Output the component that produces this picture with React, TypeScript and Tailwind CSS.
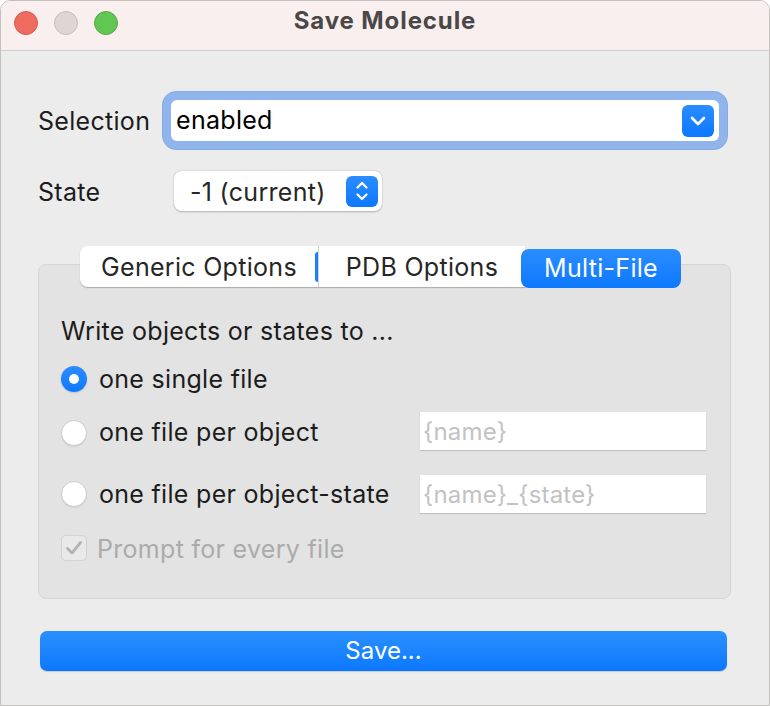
import React from "react";

const font = { fontFamily: "Inter, 'Liberation Sans', sans-serif" };

function ChevronDown() {
  return (
    <svg width="16" height="10" viewBox="0 0 16 10" fill="none">
      <path d="M2 2 L8 8 L14 2" stroke="white" strokeWidth="2.6" strokeLinecap="round" strokeLinejoin="round" />
    </svg>
  );
}

function UpDown() {
  return (
    <svg width="14" height="24" viewBox="0 0 14 24" fill="none">
      <path d="M2.5 8.5 L7 4 L11.5 8.5" stroke="white" strokeWidth="2.2" strokeLinecap="round" strokeLinejoin="round" />
      <path d="M2.5 15.5 L7 20 L11.5 15.5" stroke="white" strokeWidth="2.2" strokeLinecap="round" strokeLinejoin="round" />
    </svg>
  );
}

function Radio({ checked }: { checked?: boolean }) {
  if (checked) {
    return (
      <div className="w-[26px] h-[26px] rounded-full bg-gradient-to-b from-[#2c8cff] to-[#0a78ff] flex items-center justify-center shadow-[0_1px_2px_rgba(0,0,0,0.15)]">
        <div className="w-[10px] h-[10px] rounded-full bg-white" />
      </div>
    );
  }
  return (
    <div className="w-[26px] h-[26px] rounded-full bg-white border border-[#cdcdcd] shadow-[0_1px_1px_rgba(0,0,0,0.08)]" />
  );
}

export default function App() {
  return (
    <div className="w-[770px] h-[706px] bg-white" style={font}>
      <div className="w-full h-full rounded-t-[10px] border border-[#c4c0c0] overflow-hidden bg-[#ececec] flex flex-col">
        {/* Title bar */}
        <div className="h-[50px] bg-[#f9efee] border-b border-[#d2cdcd] grid grid-cols-[1fr_auto_1fr] items-center shrink-0">
          <div className="flex items-center gap-[16px] pl-[13px] -mt-[6px]">
            <div className="w-[24px] h-[24px] rounded-full bg-[#ee6b60] border border-[#d85a4f]" />
            <div className="w-[24px] h-[24px] rounded-full bg-[#ddd6d5] border border-[#c6bebd]" />
            <div className="w-[24px] h-[24px] rounded-full bg-[#62c655] border border-[#52ab46]" />
          </div>
          <div className="text-[24px] font-bold text-[#4b4747] -mt-[9px] tracking-[0.9px]">Save Molecule</div>
          <div />
        </div>

        {/* Body */}
        <div className="flex flex-col pl-[37px] pr-[39px] text-[25px] tracking-[0.3px]">
          {/* Selection */}
          <div className="flex items-center mt-[49px] h-[41px]">
            <div className="w-[133px] pt-[2px] text-[#1c1c1c]">Selection</div>
            <div className="w-[548px] h-[41px] bg-white rounded-[6px] shadow-[0_0_0_8px_#8fb5ec,0_0_0_9px_#86abe4] flex items-center justify-between pl-[5px] pr-[5px]">
              <span className="pt-[1px] text-black">enabled</span>
              <div className="w-[32px] h-[32px] rounded-[6px] bg-gradient-to-b from-[#2a8dff] to-[#0a78ff] flex items-center justify-center">
                <ChevronDown />
              </div>
            </div>
          </div>

          {/* State */}
          <div className="flex items-center mt-[30px] h-[40px]">
            <div className="w-[136px] pt-[3px] text-[#1c1c1c]">State</div>
            <div className="w-[208px] h-[40px] bg-white rounded-[8px] shadow-[0_0.5px_2px_rgba(0,0,0,0.25)] flex items-center justify-between pl-[16px] pr-[4px]">
              <span className="pt-[3px] text-[#262626]">-1 (current)</span>
              <div className="w-[32px] h-[31px] rounded-[6px] bg-gradient-to-b from-[#2a8dff] to-[#0a78ff] flex items-center justify-center">
                <UpDown />
              </div>
            </div>
          </div>

          {/* Tabs + group */}
          <div className="flex flex-col mt-[35px]">
            <div className="relative z-10 flex items-start ml-[42px] h-[42px] -mb-[24px]">
              <div className="flex h-[41px] bg-white rounded-l-[8px] shadow-[0_1px_1px_rgba(0,0,0,0.25)]">
                <div className="w-[238px] pt-[3px] flex items-center justify-center text-[#262626] relative">
                  Generic Options
                  <div className="absolute right-0 top-[6px] w-[3px] h-[30px] bg-[#1a80ff] rounded-l-[3px]" />
                </div>
                <div className="w-[1px] h-[41px] bg-[#d3d3d3]" />
                <div className="w-[206px] pt-[3px] flex items-center justify-center text-[#262626]">PDB Options</div>
              </div>
              <div className="-ml-[4px] mt-[3px] w-[160px] h-[39px] rounded-[8px] bg-gradient-to-b from-[#2a8dff] to-[#0a78ff] flex items-center justify-center text-white">
                Multi-File
              </div>
            </div>
            <div className="w-[693px] h-[335px] bg-[#e3e3e3] border border-[#d6d6d6] rounded-[8px] flex flex-col pl-[22px] pr-[23px] pt-[51px]">
              <div className="h-[30px] pt-[2px] flex items-center text-[#1c1c1c]">Write objects or states to ...</div>
              <div className="h-[30px] flex items-center mt-[18px]">
                <div className="w-[38px]"><Radio checked /></div>
                <span className="pt-[2px] text-[#1c1c1c]">one single file</span>
              </div>
              <div className="h-[38px] flex items-center mt-[18px]">
                <div className="w-[38px] pt-[3px]"><Radio /></div>
                <span className="w-[321px] pt-[4px] text-[#1c1c1c]">one file per object</span>
                <div className="w-[286px] h-[38px] bg-white shadow-[0_1px_1px_rgba(0,0,0,0.15)] flex items-center pl-[3px] pt-[1px] text-[24px] tracking-[0.2px] text-[#c2c2c2]">{"{name}"}</div>
              </div>
              <div className="h-[38px] flex items-center mt-[25px]">
                <div className="w-[38px]"><Radio /></div>
                <span className="w-[321px] pt-[2px] text-[#1c1c1c]">one file per object-state</span>
                <div className="w-[286px] h-[38px] bg-white shadow-[0_1px_1px_rgba(0,0,0,0.15)] flex items-center pl-[3px] pt-[1px] text-[24px] tracking-[0.2px] text-[#c2c2c2]">{"{name}_{state}"}</div>
              </div>
              <div className="h-[30px] flex items-center mt-[20px]">
                <div className="w-[26px] h-[26px] rounded-[5px] bg-[#e9e9e9] border border-[#d2d2d2] flex items-center justify-center mr-[10px]">
                  <svg width="18" height="16" viewBox="0 0 18 16" fill="none">
                    <path d="M2.5 8.5 L7 13 L15.5 2.5" stroke="#b3b3b3" strokeWidth="2.8" strokeLinecap="round" strokeLinejoin="round" />
                  </svg>
                </div>
                <span className="pt-[3px] text-[#ababab]">Prompt for every file</span>
              </div>
            </div>
          </div>

          {/* Save button */}
          <div className="mt-[32px] ml-[2px] w-[687px] h-[40px] rounded-[7px] bg-gradient-to-b from-[#2a90ff] to-[#0a78ff] shadow-[0_1px_1px_rgba(0,0,0,0.15)] flex items-center justify-center text-[24px] tracking-normal text-white">
            Save...
          </div>
        </div>
      </div>
    </div>
  );
}
